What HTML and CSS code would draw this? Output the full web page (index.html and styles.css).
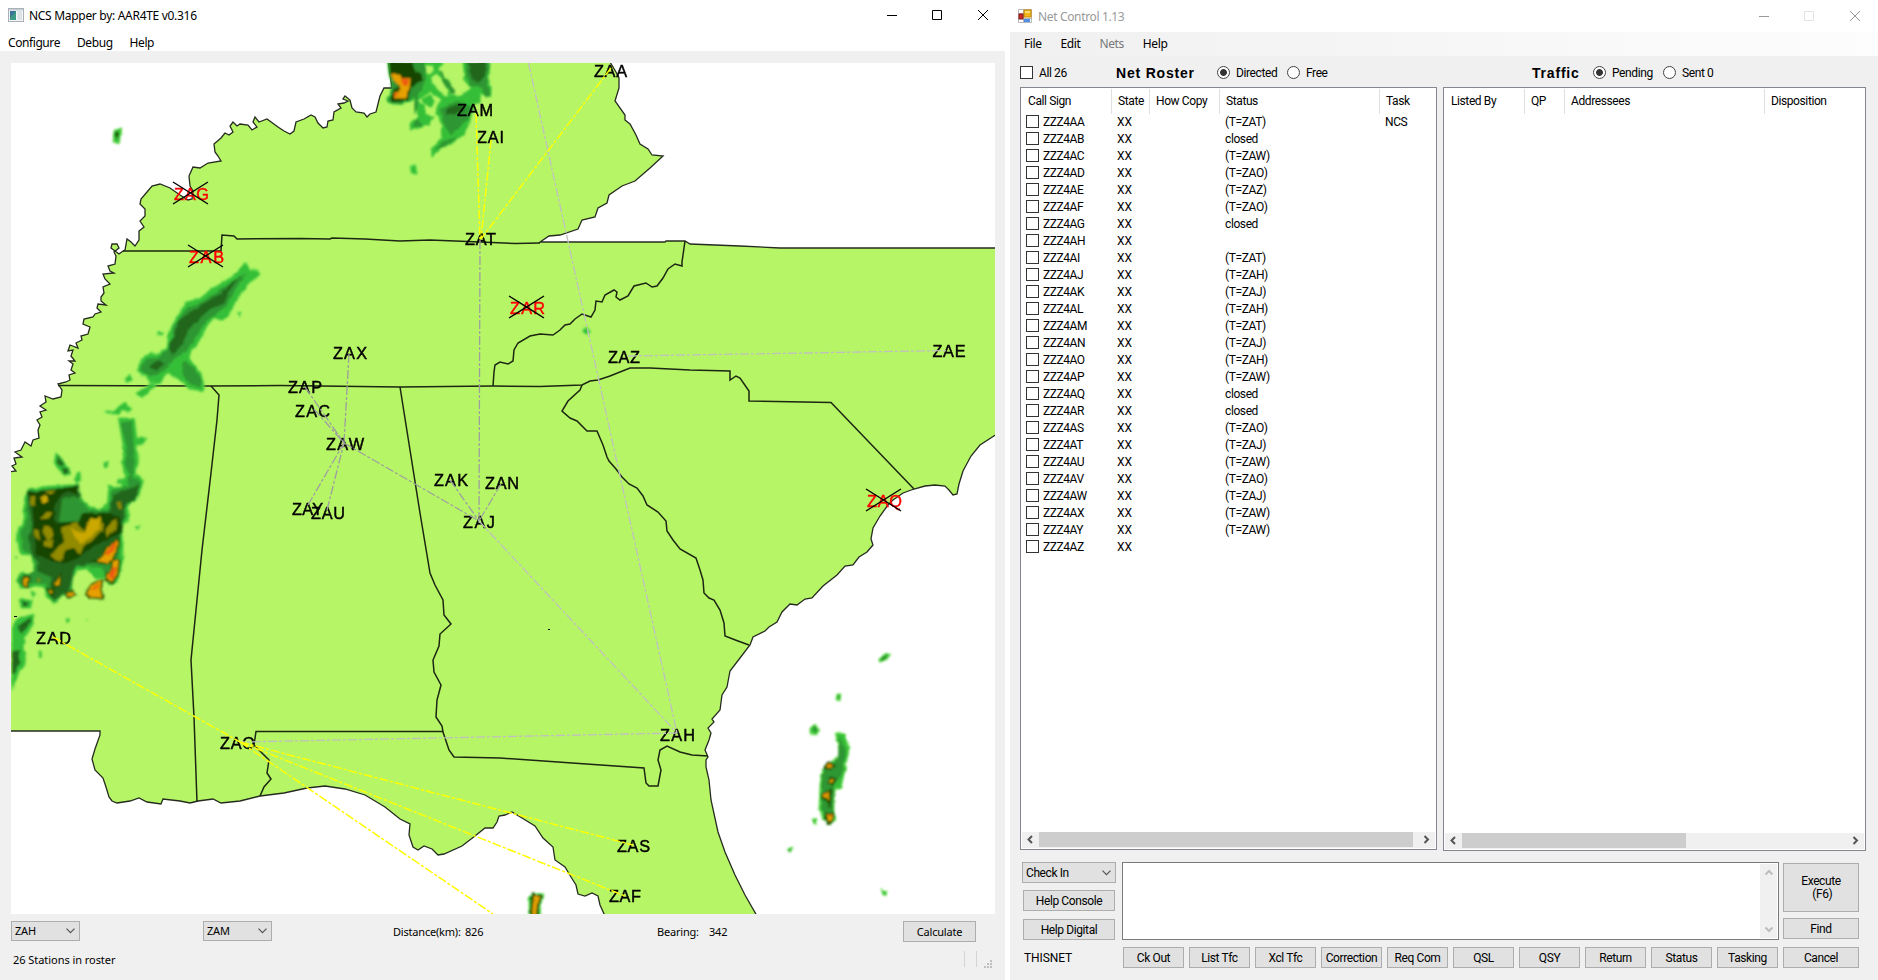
FILE: index.html
```html
<!DOCTYPE html>
<html lang="en">
<head>
<meta charset="utf-8">
<title>NCS Mapper and Net Control</title>
<link rel="stylesheet" href="styles.css">
</head>
<body>
<div class="desktop">
<section class="window mapper">
  <header class="titlebar">
    <svg class="app-icon" width="16" height="14" viewBox="0 0 16 14"><rect x=".5" y=".5" width="15" height="13" fill="#f4f6f7" stroke="#a9b1b8"/><rect x="1" y="1" width="14" height="1.5" fill="#c7ced4"/><rect x="2" y="3" width="6" height="9" fill="#3e9a83"/><path d="M2 3h6l-6 7z" fill="#3c7399"/><rect x="9.500" y="3" width="4.500" height="9" fill="#dde2e4"/></svg>
    <span class="title">NCS Mapper by: AAR4TE v0.316</span>
    <svg class="controls" width="101" height="10" viewBox="0 0 101 10"><path d="M0 5.500h10M45.500.5h9v9h-9z M91 0l10 10M101 0L91 10"/></svg>
  </header>
  <nav class="menu"><span>Configure</span><span>Debug</span><span>Help</span></nav>
  <svg class="map" viewBox="11 63 984 851" width="984" height="851">
    <defs>
      <filter id="soft" filterUnits="userSpaceOnUse" x="0" y="50" width="1000" height="880"><feTurbulence type="fractalNoise" baseFrequency=".15" numOctaves="2" seed="4" result="n"/><feDisplacementMap in="SourceGraphic" in2="n" scale="3.500" xChannelSelector="R" yChannelSelector="G"/><feGaussianBlur stdDeviation=".9"/></filter>
    </defs>
    <rect x="11" y="63" width="984" height="851" fill="#fff"/>
    <g class="land">
      <path d="M388 60L392 88 384 88 380 96 378 104 376 112 370 114 367 117 364 113 356 112 352 108 350 100 345 96 343 99 348 101 344 103 338 104 341 108 334 112 333 120 328 121 327 127 323 128 318 123 315 117 311 115 304 119 296 122 294 131 290 134 284 131 278 127 267 119 259 122 255 117 253 122 257 127 252 130 248 125 240 124 237 126 233 122 230 126 233 132 229 135 225 133 221 138 214 144 215 152 218 156 221 161 208 163 200 168 193 167 189 176 190 186 193 191 192 199 188 200 180 195 170 188 160 184 152 186 147 192 141 199 140 204 145 209 145 216 140 221 144 227 139 231 139 240 135 246 131 242 127 239 125 250 123 251 119 254 115 251 111 248 112 244 117 244 119 248 114 252 116 256 115 264 108 266 110 271 114 273 103 274 105 279 110 284 103 287 104 293 101 297 101 301 106 305 98 304 97 308 101 312 95 314 93 317 84 319 83 324 90 327 88 334 81 336 82 340 76 343 78 348 70 345 68 351 73 350 71 356 75 361 69 361 73 364 71 370 75 373 69 375 70 380 66 382 58 384 62 390 61 397 53 399 45 396 46 402 40 406 46 410 40 412 42 417 37 420 40 425 38 430 39 438 33 440 31 446 25 442 21 450 15 452 22 457 14 458 16 464 12 466 16 471 9 472 9 731 100 731 100 735 95 749 92 759 95 770 103 778 106 787 109 797 112 801 117 803 130 801 139 798 147 802 161 804 163 799 180 801 190 803 198 801 213 799 221 803 240 801 260 796 284 793 307 788 325 786 345 789 365 795 385 807 400 819 410 824 409 835 413 847 418 850 424 846 432 849 438 855 444 854 462 846 475 836 485 828 493 828 497 822 499 816 505 815 512 812 522 818 535 826 543 838 553 847 555 860 565 867 571 877 576 885 578 894 585 896 592 893 598 896 600 905 605 916 757 916 745 895 735 875 725 852 718 832 711 800 709 780 706 767 706 760 708 757 705 750 709 740 711 733 708 728 714 722 712 719 720 710 722 695 727 687 730 671 740 658 750 645 753 637 765 631 769 627 777 622 782 612 790 604 797 605 805 599 812 598 823 586 837 575 845 566 853 565 859 557 867 552 873 545 871 539 873 528 880 516 888 505 893 500 903 493 914 489 925 486 935 485 945 486 949 490 953 495 957 494 959 484 963 471 971 456 980 445 997 434 997 248 780 248 740 246 690 244 685 241 666 241 665 242 540 242 549 236 560 235 578 229 582 220 595 217 598 208 607 203 609 195 622 186 635 181 650 168 663 156 652 155 648 149 640 144 636 135 630 124 625 120 625 115 615 101 619 88 619 78 616 72 610 62Z"/>
      <g class="borders">
        <path d="M123 251H221L222 235 234 236 237 239 300 238.500 330 239 332 238 365 239 400 241 430 240 480 242 515 243.500 540 243"/>
        <path d="M685 241L683 255 682 262 682 266 675 264 668 269 663 278 657 286 652 287 646 283 634 286 628 296 620 300 616 297 617 292 614 290 605 295 602 302 596 301 595 310 591 317 582 314 575 319 570 324 565 325 560 330 553 335 540 334 530 336 518 343 514 350 513 361 508 364 500 362 495 365 494 372 493 386"/>
        <path d="M58 385.500L211 386 280 385.500 400 387 493 386 540 386.500 582 385 590 381 598 380 610 376 630 368 650 368 690 370 730 371 730 380 736 376 740 378 749 391 749 401 831 402.500 914 489"/>
        <path d="M582 385L580 390 568 401 562 411 570 418 577 421 587 431 597 431 603 445 607 457 609 461 616 469 622 477 629 484 637 488 643 496 647 505 658 512 666 521 667 531 673 540 680 549 696 558 700 570 703 580 704 593 709 598 714 600 720 610 724 623 725 636 738 641 749 645"/>
        <path d="M211 386L219 395 217 420 211 473 202 550 191 660 194 717 197 802"/>
        <path d="M400 387L410 450 420 513 430 573 435 585 443 600 444 615 451 624 440 634 439 646 433 660 434 672 441 685 437 700 436 717 442 726 443 732 449 750 454 757 500 758 644 768 646 783 649 786 658 786 661 770 658 760 660 750 667 746 680 752 692 755 708 756"/>
        <path d="M443 731.500H256L254 745 262 753 269 760 267 773 271 779 264 787 260 796"/>
      </g>
    </g>
    <g class="radar" filter="url(#soft)">
      <g transform="translate(381 61) scale(.3333)">
        <path class="r1" fill-rule="evenodd" d="M18 0L25 50 35 80 15 115 25 130 65 132 90 120 105 120 108 165 85 190 90 208 115 205 130 190 145 195 160 165 135 160 130 130 120 110 150 95 180 115 165 150 180 190 180 230 150 265 152 290 180 265 225 240 250 220 265 190 280 130 300 125 295 100 330 110 332 80 325 60 328 0 245 0 250 60 270 80 240 105 210 100 205 60 175 30 185 0ZM125 15L155 12 158 30 140 40ZM150 50L165 38 180 50 200 90 205 105 185 100 160 75ZM105 120L150 100 162 125 150 140 130 130Z"/>
        <path class="r2" d="M25 0h105l5 55-15 35-30 25-30 15-38-5 8-40zM255 0h70l-5 70 10 30-15 10-12-30-33-5-15-30zM175 145l55-25 45 18-15 40-50 45-20-28zM165 270l18-28 55-18-40 28zM95 195l12-25 18 22-15 10zM175 25l18 25 32 45-12 5-25-32zM100 80l12 0-2 60-10 20zM92 315h12v20h-12z"/>
        <path class="r3" d="M265 0h50l-3 45-20 20-22-12zM195 145l35-15 22 15-30 15-25 5z"/>
        <path class="r4" d="M25 0h70l5 35 20 0 5 25-35 20-10 40-45 3-8-15 15-25 15-5-30-35z"/>
        <path class="r6" d="M32 36l23 6 7 10 27 0-3 28-14 35-20-3-14-4 6-14 14-3-2-19-20-16z"/>
        <path class="r7" d="M60 52l25 2-5 22-15-4zM38 98l17-2-10 10z"/>
      </g>
      <g>
        <path class="r1" d="M246 262L250 270 259 270 260 275 250 283 238 297 232 310 222 322 215 317 208 325 203 335 197 345 190 352 190 360 200 370 204 383 204 392 196 391 185 386 178 379 167 374 160 384 150 384 146 377 137 371 140 360 150 353 160 353 167 347 168 335 172 325 180 312 185 302 200 298 212 288 225 281 235 273Z"/>
        <path class="r2" d="M248 273L236 288 228 305 216 314 206 321 196 338 186 352 174 359 164 371 150 377 140 370 144 360 160 356 172 344 173 328 185 310 207 299 224 287ZM182 361l11 5 9 14-2 8-12-5-5-8z"/>
        <path class="r3" d="M243 274l-13 15-6 15-14 5-20 19-9 18-10 10-1-12 9-24 27-18 14-8 10-10zM148 367l10-7 8 4-11 7z"/>
        <path class="r1" d="M125 378l5-3 3 5-7 3zM135 393l8-4 10-7 3 4-14 12zM104 412l10-1 9-9 5 4 4 2-3 4-7-2-2 5-10-1z"/>
      </g>
      <g transform="translate(12 431) scale(.3333)">
        <path class="r1" d="M318 -40L368 -40 375 20 405 20 400 35 375 45 380 90 372 130 395 145 388 175 375 210 350 220 350 270 330 285 335 320 332 400 315 455 290 460 278 440 255 445 240 435 225 415 200 418 182 440 180 490 150 495 125 520 105 500 95 465 60 470 45 475 25 470 10 445 25 425 60 430 65 400 55 375 25 370 15 330 18 290 35 280 35 200 50 175 100 165 200 158 205 200 230 225 265 235 285 215 290 160 310 170 330 165 315 145 340 140 330 100 335 60Z"/>
        <path class="r2" d="M45 180L200 163 205 210 235 238 290 236 298 180 345 165 352 130 338 100 345 50 325 -25 360 -30 368 90 362 140 388 150 375 205 345 220 335 275 325 320 318 440 285 450 270 410 225 405 190 410 175 480 125 512 105 485 100 455 20 460 20 440 65 420 70 390 30 350 25 300 42 280Z"/>
        <path class="r3" d="M45 185L200 165 203 200 185 195 150 205 145 240 140 275 205 275 210 250 290 245 305 190 375 165 385 150 372 205 342 218 335 275 325 330 230 400 190 405 165 480 125 508 112 480 120 440 75 420 80 395 60 370 48 320 60 280 50 220Z"/>
        <path class="r4" d="M48 185L200 165 195 188 165 180 140 200 125 230 130 275 200 270 215 245 290 245 325 260 328 305 290 325 235 350 200 380 150 400 110 385 75 375 65 290 62 220Z"/>
        <path class="r5" d="M150 290L190 272 215 300 235 262 265 258 275 290 240 330 215 345 205 372 185 350 160 358 145 395 115 375 140 345 155 335ZM55 195l15 0-2 30-10-3zM85 265l20-25 17 5-12 17zM65 290l15 10 5 30-15-10zM95 280l20 10 10 20-15 20-15-15zM95 330l30-5-5 25-25-5zM95 182l35-5-12 14zM280 300l20-30 15-8-5 33-25 27zM315 215l10-5 5 20-10 4zM75 440l10 5-7 12zM0 665l6 10-6 35z"/>
        <path class="r6y" d="M235 262L265 260 262 292 230 320 208 340 188 315 175 290 205 305 218 305ZM85 198l20-4 3 18-18 4z"/>
        <path class="r6 edge" d="M250 390L270 380 285 350 315 328 320 340 300 385 285 395ZM302 388L320 390 315 430 300 452 282 445 285 430 300 425ZM228 482L240 462 268 450 265 475 270 500 240 498 225 490ZM36 440h14l-5 28-10-6zM130 455l15-20-3 25-12 5zM110 478l12 2-4 10zM165 485l15-5 8 12-18 5z"/>
        <path class="r7" d="M278 368L300 340 315 332 312 350 287 375ZM300 410l15-5-10 40-17-3zM235 477l27-19-4 14z"/>
        <path class="r1" d="M130 62l12 12 16 26 14 10 3 22-15 5-17-17-17-24zM185 145l13-25 8 5 0 25-13 5zM275 95l15-5-3 18-12 1zM372 285l12-2-6 15zM20 505h42l-5 27-30 0zM55 480l14 5-7 16zM0 590l15-30 52-12-5 38-20 30-10 34 10 12-2 40-22 28-18 50zM162 562h11l-2 13h-8zM81 660h8v20h-8zM222 564l8 0-4 6zM319 147l12-4-2 18-16-4zM8 378l8-3-2 9z"/>
        <path class="r3" d="M137 75l17 25-6 8-14-15zM150 112l18 0 0 15-12 2zM32 513l20 0-5 12-14 1zM20 582l40-24-12 28-20 24-6-10zM0 660l22-3 0 42-22 35z"/>
      </g>
      <g>
        <path class="r1" d="M114 130l8-1-3 15-6-2zM410 166l6-1 1 8-6 1zM158 331l6 1-2 4-5-1zM237 312l5 1-2 4zM835 732L845 734 849 750 845 771 841 788 834 791 834 812 836 820 830 824 823 819 819 808 820 784 823 768 833 760 840 756 838 745ZM586 327l5 4-5 4-4-4zM878 660l7-6 6-1-3 6-8 3zM837 694l4 0-1 7-4-1zM810 728l5-4 5 6-4 5-6-2zM812 819l5 0-1 4-3 1zM787 849l6-2-3 6zM882 888l5 4-1 4-3-2zM529 916l0-18 4-5 11 1-4 12 1 12z"/>
        <path class="r2" d="M839 736l7 14-4 24-8 12-1 33-7 3-5-14 0-20 3-20 14-10zM880 660l9-5-6 6zM813 728l4 1-2 4zM838 695l2 1-1 4zM788 849l3 0-2 3zM531 896l10-2-2 13v10h-8z"/>
        <path class="r4" d="M116 133h3l-2 7zM814 728l2 1-1 2zM882 659l5-3-4 3z"/>
        <path class="r6 tight" d="M829 763l4 3-3 2-4-1zM831 779l3 1-1 3-3-1zM823 794l7-2-1 10-3-5-3 0zM827 814l5 0-1 7-3 1zM534 895l6 2-3 9-1 10h-4l1-12z"/>
        <path class="r7" d="M829 764l2 2-3 0zM825 793l2 2-3 0zM829 814l2 1-2 2z"/>
      </g>
    </g>
    <path d="M548 629h2v1h-2zM14 616h3v1h-3z"/>
    <g class="labels">
      <text x="457" y="115.500" textLength="36">ZAM</text><text x="477" y="143" textLength="27">ZAI</text><text x="465" y="245" textLength="31">ZAT</text><text x="594" y="76.500" textLength="33">ZAA</text><text x="333" y="358.500" textLength="34">ZAX</text><text x="288" y="392.500" textLength="34">ZAP</text><text x="295" y="416.500" textLength="35">ZAC</text><text x="326" y="449.500" textLength="38">ZAW</text><text x="434" y="485.500" textLength="34">ZAK</text><text x="485" y="488.500" textLength="34">ZAN</text><text x="463" y="527.500" textLength="32">ZAJ</text><text x="292" y="514.500" textLength="31">ZAY</text><text x="311" y="518.500" textLength="34">ZAU</text><text x="36" y="643.500" textLength="35">ZAD</text><text x="608" y="362.500" textLength="32">ZAZ</text><text x="932.500" y="356.500" textLength="33">ZAE</text><text x="220" y="748.500" textLength="35">ZAO</text><text x="660" y="740.500" textLength="35">ZAH</text><text x="617" y="851.500" textLength="33">ZAS</text><text x="609" y="901.500" textLength="32">ZAF</text>
      <g class="closed"><text x="174" y="199.500" textLength="35">ZAG</text><text x="189" y="262.500" textLength="35">ZAB</text><text x="510" y="313.500" textLength="35">ZAR</text><text x="867" y="506.500" textLength="35">ZAQ</text></g>
    </g>
    <path class="cross" d="M173 182l35 22m0-22l-35 22M188 245l35 22m0-22l-35 22M509 296l35 22m0-22l-35 22M866 489l35 22m0-22l-35 22"/>
    <g class="links">
      <path class="gray" d="M480 240L479 521M349 354L344 443M305 387L344 443M314 409L344 443M308 505L344 443M327 510L344 443M344 443L479 521M450 480L479 521M501 484L479 521"/>
      <path class="silver" d="M479 521L677 733M528.500 63L677 733M677 733L242 742M628 356L948 350.500"/>
      <path class="yellow" d="M476 114L480 239M491 140L481 239M611 68L481 239M53 637L240 742M240 742L633 845M240 742L625 896M240 742L493 914"/>
    </g>
  </svg>
  <div class="calc">
    <span class="combo">ZAH<svg width="9" height="6" viewBox="0 0 9 6"><path d="M.5.7l4 4 4-4"/></svg></span>
    <span class="combo second">ZAM<svg width="9" height="6" viewBox="0 0 9 6"><path d="M.5.7l4 4 4-4"/></svg></span>
    <span class="distance">Distance(km):</span><span class="km">826</span>
    <span class="bearing">Bearing:</span><span class="deg">342</span>
    <button class="btn calculate">Calculate</button>
  </div>
  <footer class="status"><span>26 Stations in roster</span><i></i><i class="last"></i><svg width="8" height="8" viewBox="0 0 8 8"><path d="M6 0h2v2h-2zM3 3h2v2h-2zM6 3h2v2h-2zM0 6h2v2h-2zM3 6h2v2h-2zM6 6h2v2h-2z"/></svg></footer>
</section>

<section class="window netcontrol">
  <header class="titlebar">
    <svg class="app-icon" width="14" height="14" viewBox="0 0 14 14"><path d="M.5.5h13v13H.5zM.5 4.500h5M5.500 0v14M5.500 9.500h8" fill="#fff" stroke="#b8b8b8"/><rect x="6" y="1" width="7" height="7" fill="#f3b619" stroke="#c88a00"/><rect x="7" y="2" width="5" height="2" fill="#fbdc74"/><rect x="1" y="5" width="4" height="5" fill="#c92a22" stroke="#8c1a17"/><rect x="6" y="10" width="6" height="3" fill="#4f8fe8"/></svg>
    <span class="title">Net Control 1.13</span>
    <svg class="controls" width="101" height="10" viewBox="0 0 101 10"><path d="M0 5.500h10M91 0l10 10M101 0L91 10"/><path class="off" d="M45.500.5h9v9h-9z"/></svg>
  </header>
  <nav class="menu"><span>File</span><span>Edit</span><span class="disabled">Nets</span><span>Help</span></nav>
  <div class="filters">
    <i class="check"></i><span class="all">All 26</span>
    <h2 class="roster-title">Net Roster</h2>
    <i class="radio on"></i><span class="directed">Directed</span><i class="radio"></i><span class="free">Free</span>
    <h2 class="traffic-title">Traffic</h2>
    <i class="radio on"></i><span class="pending">Pending</span><i class="radio"></i><span>Sent 0</span>
  </div>
  <div class="lists">
    <div class="list roster">
      <div class="head"><span>Call Sign</span><span>State</span><span>How Copy</span><span>Status</span><span>Task</span></div>
      <div class="rows">
        <div class="row"><i class="check"></i><b>ZZZ4AA</b><b>XX</b><b>(T=ZAT)</b><b>NCS</b></div>
        <div class="row"><i class="check"></i><b>ZZZ4AB</b><b>XX</b><b>closed</b></div>
        <div class="row"><i class="check"></i><b>ZZZ4AC</b><b>XX</b><b>(T=ZAW)</b></div>
        <div class="row"><i class="check"></i><b>ZZZ4AD</b><b>XX</b><b>(T=ZAO)</b></div>
        <div class="row"><i class="check"></i><b>ZZZ4AE</b><b>XX</b><b>(T=ZAZ)</b></div>
        <div class="row"><i class="check"></i><b>ZZZ4AF</b><b>XX</b><b>(T=ZAO)</b></div>
        <div class="row"><i class="check"></i><b>ZZZ4AG</b><b>XX</b><b>closed</b></div>
        <div class="row"><i class="check"></i><b>ZZZ4AH</b><b>XX</b></div>
        <div class="row"><i class="check"></i><b>ZZZ4AI</b><b>XX</b><b>(T=ZAT)</b></div>
        <div class="row"><i class="check"></i><b>ZZZ4AJ</b><b>XX</b><b>(T=ZAH)</b></div>
        <div class="row"><i class="check"></i><b>ZZZ4AK</b><b>XX</b><b>(T=ZAJ)</b></div>
        <div class="row"><i class="check"></i><b>ZZZ4AL</b><b>XX</b><b>(T=ZAH)</b></div>
        <div class="row"><i class="check"></i><b>ZZZ4AM</b><b>XX</b><b>(T=ZAT)</b></div>
        <div class="row"><i class="check"></i><b>ZZZ4AN</b><b>XX</b><b>(T=ZAJ)</b></div>
        <div class="row"><i class="check"></i><b>ZZZ4AO</b><b>XX</b><b>(T=ZAH)</b></div>
        <div class="row"><i class="check"></i><b>ZZZ4AP</b><b>XX</b><b>(T=ZAW)</b></div>
        <div class="row"><i class="check"></i><b>ZZZ4AQ</b><b>XX</b><b>closed</b></div>
        <div class="row"><i class="check"></i><b>ZZZ4AR</b><b>XX</b><b>closed</b></div>
        <div class="row"><i class="check"></i><b>ZZZ4AS</b><b>XX</b><b>(T=ZAO)</b></div>
        <div class="row"><i class="check"></i><b>ZZZ4AT</b><b>XX</b><b>(T=ZAJ)</b></div>
        <div class="row"><i class="check"></i><b>ZZZ4AU</b><b>XX</b><b>(T=ZAW)</b></div>
        <div class="row"><i class="check"></i><b>ZZZ4AV</b><b>XX</b><b>(T=ZAO)</b></div>
        <div class="row"><i class="check"></i><b>ZZZ4AW</b><b>XX</b><b>(T=ZAJ)</b></div>
        <div class="row"><i class="check"></i><b>ZZZ4AX</b><b>XX</b><b>(T=ZAW)</b></div>
        <div class="row"><i class="check"></i><b>ZZZ4AY</b><b>XX</b><b>(T=ZAW)</b></div>
        <div class="row"><i class="check"></i><b>ZZZ4AZ</b><b>XX</b></div>
      </div>
      <div class="scroll"><svg width="17" height="16" viewBox="0 0 17 16"><path d="M10 4L6.500 7.500 10 11"/></svg><i class="thumb"></i><svg width="17" height="16" viewBox="0 0 17 16"><path d="M6.500 4L10 7.500 6.500 11"/></svg></div>
    </div>
    <div class="list traffic">
      <div class="head"><span>Listed By</span><span>QP</span><span>Addressees</span><span>Disposition</span></div>
      <div class="rows"></div>
      <div class="scroll"><svg width="17" height="16" viewBox="0 0 17 16"><path d="M10 4L6.500 7.500 10 11"/></svg><i class="thumb"></i><svg width="17" height="16" viewBox="0 0 17 16"><path d="M6.500 4L10 7.500 6.500 11"/></svg></div>
    </div>
  </div>
  <div class="console">
    <div class="side">
      <span class="combo">Check In<svg width="9" height="6" viewBox="0 0 9 6"><path d="M.5.7l4 4 4-4"/></svg></span>
      <button class="btn">Help Console</button>
      <button class="btn">Help Digital</button>
    </div>
    <div class="entry"><div class="vscroll"><svg width="8" height="7" viewBox="0 0 8 7"><path d="M.5 5.500L4 2l3.500 3.500"/></svg><svg width="8" height="7" viewBox="0 0 8 7"><path d="M.5 1.500L4 5l3.500-3.500"/></svg></div></div>
    <div class="run"><button class="btn execute">Execute<br>&nbsp;(F6)</button><button class="btn">Find</button></div>
  </div>
  <div class="actions">
    <span class="net">THISNET</span>
    <button class="btn">Ck Out</button><button class="btn">List Tfc</button><button class="btn">Xcl Tfc</button><button class="btn">Correction</button><button class="btn">Req Com</button><button class="btn">QSL</button><button class="btn">QSY</button><button class="btn">Return</button><button class="btn">Status</button><button class="btn">Tasking</button><button class="btn cancel">Cancel</button>
  </div>
</section>
</div>
</body>
</html>
```
FILE: styles.css
```css
* { box-sizing: border-box; }
body { margin: 0; background: #fff; color: #000; overflow: hidden; }
.desktop { display: flex; gap: 5px; width: 1878px; height: 980px; }
.window { display: flex; flex-direction: column; height: 980px; background: #f0f0f0; overflow: hidden; white-space: nowrap; }
.titlebar { display: flex; align-items: center; background: #fff; flex: none; }
.controls { margin-left: auto; overflow: visible; fill: none; stroke: #000; }
.menu { display: flex; flex: none; }
.btn { display: flex; align-items: center; justify-content: center; margin: 0; padding: 0; border: 1px solid #adadad; background: #e1e1e1; color: #000; font: inherit; letter-spacing: inherit; flex: none; }
.combo { display: flex; align-items: center; justify-content: space-between; padding: 0 4px 0 3px; border: 1px solid #adadad; background: #e1e1e1; }
.combo svg { fill: none; stroke: #555; stroke-width: 1.2; }

/* Mapper window */
.mapper { width: 1005px; font: 11px/14px "Noto Sans", sans-serif; letter-spacing: -.2px; }
.mapper .titlebar { height: 31px; padding: 0 17px 1px 8px; font-size: 12px; letter-spacing: -.3px; }
.mapper .title { margin-left: 5px; padding-top: 2px; }
.mapper .menu { height: 20px; padding-left: 8px; gap: 17px; background: #fff; font-size: 12px; line-height: 23px; letter-spacing: -.42px; }
.map { display: block; margin: 12px 0 0 11px; flex: none; }
.land > path { fill: #b6f666; stroke: #262b20; stroke-width: 1.3; }
.borders { fill: none; stroke: #1c2612; stroke-width: 1.5; }
.r1 { fill: #35bf38; stroke: #6fe355; stroke-width: 1; }
.r2 { fill: #2f9630; }
.r3 { fill: #22661f; }
.r4 { fill: #174400; }
.r5 { fill: #928b00; }
.r6y { fill: #cba800; }
.r6 { fill: #e6a000; }
.r7 { fill: #ee5c0c; }
.edge { stroke: #1c5000; stroke-width: 10; paint-order: stroke; }
.tight { stroke: #1c5000; stroke-width: 4; paint-order: stroke; }
.labels { font: 16.3px "Liberation Sans", sans-serif; letter-spacing: 0; fill: #000; stroke: #000; stroke-width: .45; }
.labels .closed { fill: #f00; stroke: #f00; }
.cross { fill: none; stroke: #000; stroke-width: 1.4; }
.links { fill: none; stroke-width: 1.3; stroke-dasharray: 9 2 3 2; }
.gray { stroke: #9e9ea0; }
.silver { stroke: #c0c0c0; }
.yellow { stroke: #ff0; stroke-width: 1.5; }
.calc { display: flex; height: 28px; margin: 7px 0 0 11px; line-height: 22px; }
.calc .combo { width: 69px; height: 20px; }
.calc .second { margin: 0 121px 0 123px; }
.distance { width: 72px; }
.km { width: 192px; }
.bearing { width: 52px; }
.deg { width: 194px; }
.calculate { width: 73px; height: 21px; }
.status { display: flex; height: 17px; margin-top: 2px; padding: 0 13px 0 13px; line-height: 17px; }
.status span { margin-right: auto; letter-spacing: -.05px; }
.status i { width: 1px; height: 16px; margin-right: 11px; background: #d4d4d4; }
.status .last { margin-right: 7px; }
.status svg { align-self: flex-end; fill: #bfbfbf; }

/* Net control window */
.netcontrol { width: 868px; font: 12px/14px Roboto, sans-serif; letter-spacing: -.4px; }
.netcontrol .titlebar { height: 32px; padding: 0 18px 0 8px; font: 12px "Noto Sans", sans-serif; letter-spacing: -.35px; color: #999; }
.netcontrol .title { margin-left: 6px; }
.netcontrol .controls { stroke: #999; }
.controls .off { stroke: #e3e3e3; }
.netcontrol .menu { height: 24px; padding-left: 14px; gap: 19px; line-height: 24px; font-family: "Noto Sans", sans-serif; letter-spacing: -.4px; background: linear-gradient(90deg, #f0f0f0, #fdfdfd); }
.disabled { color: #777; }
.check { display: block; width: 13px; height: 13px; border: 1px solid #333; background: #fff; flex: none; }
.radio { display: block; width: 13px; height: 13px; border: 1px solid #444; border-radius: 50%; background: #fff; flex: none; margin-right: 6px; }
.radio.on { background: radial-gradient(circle, #333 3px, #fff 3.8px); }
.filters { display: flex; align-items: center; height: 31px; padding: 2px 0 0 10px; }
.filters .check { margin-right: 6px; }
.filters h2 { margin: 0; font: bold 14px "Liberation Sans", sans-serif; letter-spacing: .8px; }
.all { width: 77px; }
.filters .roster-title { width: 101px; }
.directed { width: 51px; }
.free { width: 226px; }
.filters .traffic-title { width: 61px; letter-spacing: .8px; }
.pending { width: 51px; }
.lists { display: flex; align-items: flex-start; gap: 6px; margin-left: 10px; flex: none; }
.list { display: flex; flex-direction: column; border: 1px solid #828790; background: #fff; }
.roster { width: 417px; height: 763px; }
.traffic { width: 423px; height: 764px; }
.head { display: grid; height: 25px; padding-top: 1px; flex: none; }
.head span { padding-left: 6px; line-height: 25px; border-right: 1px solid #e0e0e0; }
.head span:first-child { padding-left: 7px; }
.head span:last-child { border: 0; }
.roster .head { grid-template-columns: 91px 38px 70px 160px 1fr; }
.traffic .head { grid-template-columns: 81px 40px 200px 1fr; }
.rows { flex: 1; }
.row { display: grid; grid-template-columns: 17px 74px 108px 160px 1fr; align-items: center; height: 17px; padding-left: 5px; }
.row b { font-weight: 400; }
.row b:first-of-type { letter-spacing: -.45px; }
.row b:nth-of-type(2) { letter-spacing: -.1px; }
.scroll { display: flex; height: 16px; margin: 0 1px 1px; background: #f0f0f0; flex: none; }
.scroll svg { fill: none; stroke: #555; stroke-width: 2; flex: none; }
.scroll svg:last-child { margin-left: auto; }
.thumb { width: 374px; height: 15px; background: #cdcdcd; }
.traffic .thumb { width: 224px; }
.console { display: flex; margin: 11px 0 0 12px; height: 78px; flex: none; }
.side { display: flex; flex-direction: column; width: 94px; }
.side .combo { height: 21px; }
.side .btn { width: 92px; height: 21px; margin: 7px 0 0 1px; }
.side .btn:last-child { margin-top: 8px; }
.entry { display: flex; justify-content: flex-end; width: 657px; margin-left: 6px; padding: 1px; border: 1px solid #7a7a7a; background: #fff; }
.vscroll { display: flex; flex-direction: column; justify-content: space-between; align-items: center; width: 17px; padding: 5px 0; background: #f0f0f0; }
.vscroll svg { fill: none; stroke: #bdbdbd; stroke-width: 2; }
.run { display: flex; flex-direction: column; gap: 6px; padding: 1px 0 0 4px; }
.run .btn { width: 76px; height: 21px; }
.run .execute { height: 49px; line-height: 13px; }
.actions { display: flex; gap: 5px; margin: 7px 0 0 14px; }
.actions .btn { width: 61px; height: 21px; }
.actions .cancel { width: 76px; }
.net { width: 94px; line-height: 22px; letter-spacing: -.1px; }
```
